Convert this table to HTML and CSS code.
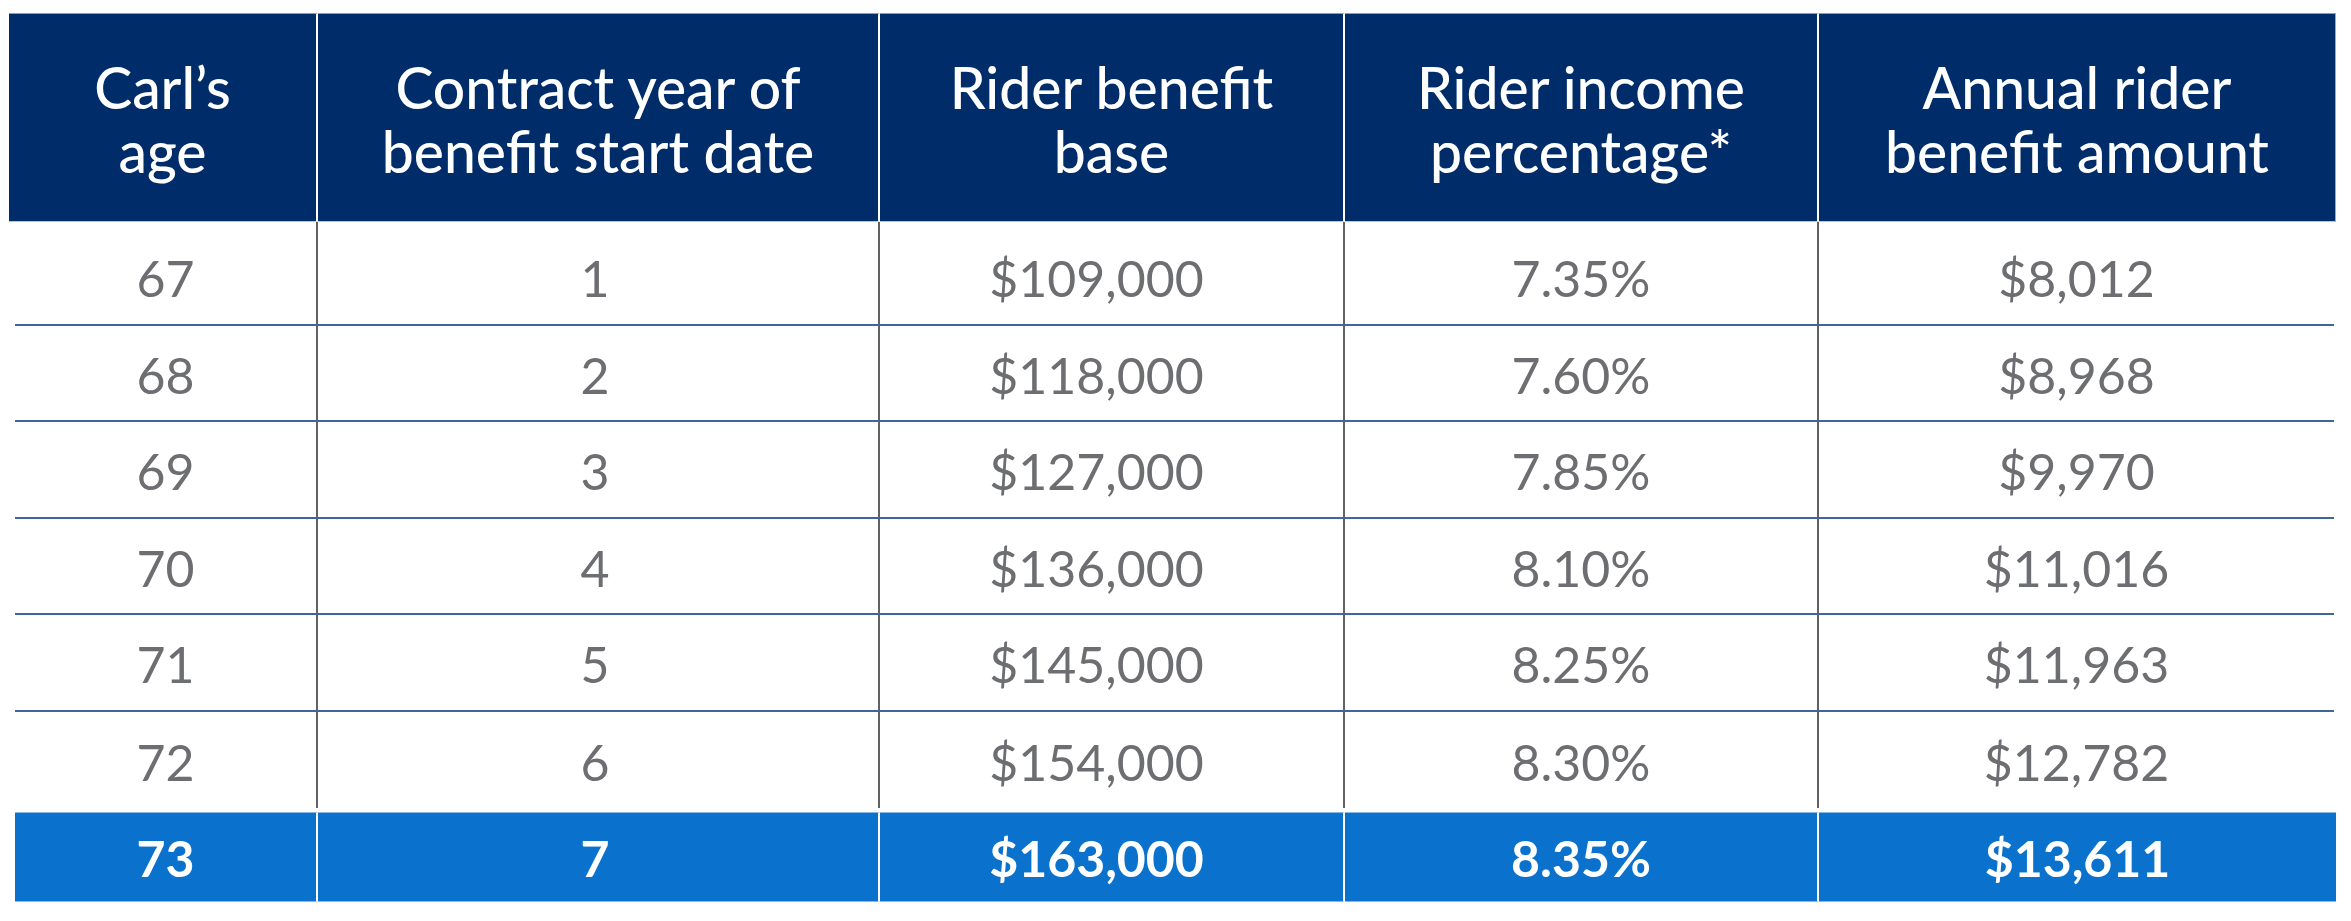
FILE: index.html
```html
<!DOCTYPE html>
<html lang="en">
<head>
<meta charset="utf-8">
<title>Rider benefit table</title>
<link rel="stylesheet" href="styles.css">
</head>
<body>
<div class="table">
  <div class="head">
    <div class="hcell">Carl’s<br>age</div>
    <div class="hcell">Contract year of<br>benefit start date</div>
    <div class="hcell">Rider benefit<br>base</div>
    <div class="hcell">Rider income<br>percentage*</div>
    <div class="hcell">Annual rider<br>benefit amount</div>
  </div>
  <div class="body">
    <div class="row"><div class="cell">67</div><div class="cell">1</div><div class="cell">$109,000</div><div class="cell">7.35%</div><div class="cell">$8,012</div></div>
    <div class="row"><div class="cell">68</div><div class="cell">2</div><div class="cell">$118,000</div><div class="cell">7.60%</div><div class="cell">$8,968</div></div>
    <div class="row"><div class="cell">69</div><div class="cell">3</div><div class="cell">$127,000</div><div class="cell">7.85%</div><div class="cell">$9,970</div></div>
    <div class="row"><div class="cell">70</div><div class="cell">4</div><div class="cell">$136,000</div><div class="cell">8.10%</div><div class="cell">$11,016</div></div>
    <div class="row"><div class="cell">71</div><div class="cell">5</div><div class="cell">$145,000</div><div class="cell">8.25%</div><div class="cell">$11,963</div></div>
    <div class="row"><div class="cell">72</div><div class="cell">6</div><div class="cell">$154,000</div><div class="cell">8.30%</div><div class="cell">$12,782</div></div>
  </div>
  <div class="total">
    <div class="tcell">73</div><div class="tcell">7</div><div class="tcell">$163,000</div><div class="tcell">8.35%</div><div class="tcell">$13,611</div>
  </div>
</div>
</body>
</html>
```
FILE: styles.css
```css
html, body {
  margin: 0;
  padding: 0;
  background: #ffffff;
}

.table {
  margin: 13px 0 0 9px;
  width: 2327px;
  font-family: "Lato", "Liberation Sans", sans-serif;
}

.head {
  display: grid;
  grid-template-columns: 309px 562px 465px 474px 517px;
  height: 209px;
}

.hcell {
  box-sizing: border-box;
  background: #002d6a;
  border-top: 1px solid #8c9dbb;
  border-bottom: 1px solid #b8c5d9;
  border-right: 2px solid #ffffff;
  display: flex;
  align-items: center;
  justify-content: center;
  text-align: center;
  color: #ffffff;
  font-size: 57px;
  font-weight: 500;
  line-height: 64px;
  padding-top: 2px;
}

.hcell:last-child {
  border-right: 1px solid #9aaac6;
}

.body {
  margin-left: 6px;
  width: 2319px;
}

.row {
  box-sizing: border-box;
  display: grid;
  grid-template-columns: 303px 562px 465px 474px 515px;
  height: 96px;
  border-bottom: 2px solid #3f659b;
}

.row:nth-child(odd) {
  height: 97px;
}

.row:first-child {
  height: 104px;
}

.row:last-child {
  border-bottom: none;
}

.cell {
  box-sizing: border-box;
  display: flex;
  align-items: center;
  justify-content: center;
  padding-top: 3px;
  border-right: 2px solid #616166;
  color: #6d6e71;
  font-size: 50px;
  line-height: 60px;
}

.row:first-child .cell {
  padding-top: 10px;
}

.cell:nth-child(2),
.tcell:nth-child(2) {
  padding-right: 6px;
}

.cell:nth-child(3),
.tcell:nth-child(3) {
  padding-right: 30px;
}

.cell:last-child {
  border-right: none;
}

.total {
  box-sizing: border-box;
  margin: 4px 0 0 6px;
  width: 2321px;
  height: 90px;
  display: grid;
  grid-template-columns: 303px 562px 465px 474px 517px;
}

.tcell {
  box-sizing: border-box;
  background: #0a72cd;
  border-top: 1px solid #86b8e8;
  border-bottom: 1px solid #86b8e8;
  border-right: 2px solid #ffffff;
  display: flex;
  align-items: center;
  justify-content: center;
  color: #ffffff;
  font-size: 50px;
  font-weight: 700;
  line-height: 60px;
  padding-top: 2px;
}

.tcell:last-child {
  border-right: none;
}
```
